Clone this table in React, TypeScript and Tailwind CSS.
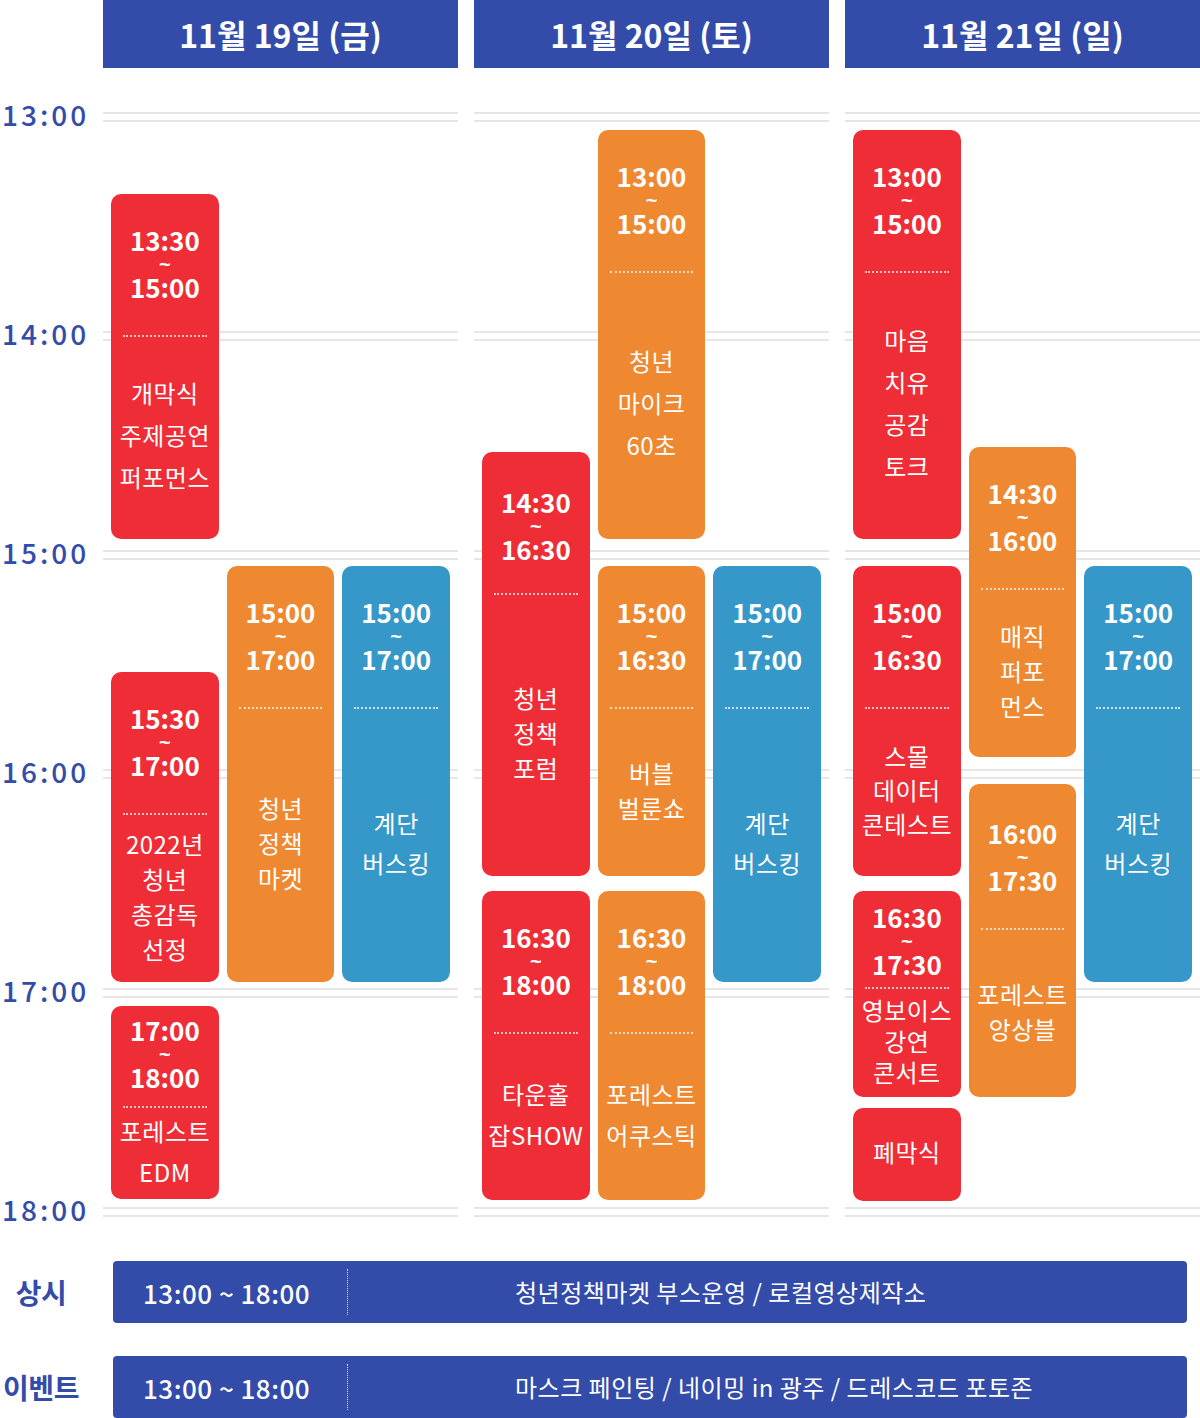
import React from "react"

type Color = "red" | "orange" | "blue"

interface Slot {
  color: Color
  box: string
  pad?: string
  lh?: string
  time?: [string, string]
  title: string[]
}

const COLORS: Record<Color, string> = {
  red: "bg-[#ef2d36]",
  orange: "bg-[#ee8831]",
  blue: "bg-[#3698c8]",
}

const STD = "pt-[33px] pb-[35px]"

const busking: Slot = {
  color: "blue",
  box: "mt-[498px] h-[416px]",
  pad: STD,
  lh: "leading-[40px]",
  time: ["15:00", "17:00"],
  title: ["계단", "버스킹"],
}

const days: { label: string; cols: Slot[][] }[] = [
  {
    label: "11월 19일 (금)",
    cols: [
      [
        {
          color: "red",
          box: "mt-[126px] h-[345px]",
          pad: STD,
          lh: "leading-[42px]",
          time: ["13:30", "15:00"],
          title: ["개막식", "주제공연", "퍼포먼스"],
        },
        {
          color: "red",
          box: "mt-[133px] h-[310px]",
          pad: STD,
          lh: "leading-[35px]",
          time: ["15:30", "17:00"],
          title: ["2022년", "청년", "총감독", "선정"],
        },
        {
          color: "red",
          box: "mt-[24px] h-[193px]",
          pad: "pt-[11px] pb-[16px]",
          lh: "leading-[41px]",
          time: ["17:00", "18:00"],
          title: ["포레스트", "EDM"],
        },
      ],
      [
        {
          color: "orange",
          box: "mt-[498px] h-[416px]",
          pad: STD,
          lh: "leading-[35px]",
          time: ["15:00", "17:00"],
          title: ["청년", "정책", "마켓"],
        },
      ],
      [busking],
    ],
  },
  {
    label: "11월 20일 (토)",
    cols: [
      [
        {
          color: "red",
          box: "mt-[384px] h-[424px]",
          pad: "pt-[37px] pb-[31px]",
          lh: "leading-[35px]",
          time: ["14:30", "16:30"],
          title: ["청년", "정책", "포럼"],
        },
        {
          color: "red",
          box: "mt-[15px] h-[309px]",
          pad: STD,
          lh: "leading-[41px]",
          time: ["16:30", "18:00"],
          title: ["타운홀", "잡SHOW"],
        },
      ],
      [
        {
          color: "orange",
          box: "mt-[62px] h-[409px]",
          pad: STD,
          lh: "leading-[42px]",
          time: ["13:00", "15:00"],
          title: ["청년", "마이크", "60초"],
        },
        {
          color: "orange",
          box: "mt-[27px] h-[310px]",
          pad: STD,
          lh: "leading-[35px]",
          time: ["15:00", "16:30"],
          title: ["버블", "벌룬쇼"],
        },
        {
          color: "orange",
          box: "mt-[15px] h-[309px]",
          pad: STD,
          lh: "leading-[41px]",
          time: ["16:30", "18:00"],
          title: ["포레스트", "어쿠스틱"],
        },
      ],
      [busking],
    ],
  },
  {
    label: "11월 21일 (일)",
    cols: [
      [
        {
          color: "red",
          box: "mt-[62px] h-[409px]",
          pad: STD,
          lh: "leading-[42px]",
          time: ["13:00", "15:00"],
          title: ["마음", "치유", "공감", "토크"],
        },
        {
          color: "red",
          box: "mt-[27px] h-[310px]",
          pad: STD,
          lh: "leading-[34px]",
          time: ["15:00", "16:30"],
          title: ["스몰", "데이터", "콘테스트"],
        },
        {
          color: "red",
          box: "mt-[15px] h-[206px]",
          pad: "pt-[13px] pb-[10px]",
          lh: "leading-[31px]",
          time: ["16:30", "17:30"],
          title: ["영보이스", "강연", "콘서트"],
        },
        {
          color: "red",
          box: "mt-[11px] h-[93px]",
          title: ["폐막식"],
        },
      ],
      [
        {
          color: "orange",
          box: "mt-[379px] h-[310px]",
          pad: STD,
          lh: "leading-[35px]",
          time: ["14:30", "16:00"],
          title: ["매직", "퍼포", "먼스"],
        },
        {
          color: "orange",
          box: "mt-[27px] h-[313px]",
          pad: "pt-[36px] pb-[35px]",
          lh: "leading-[35px]",
          time: ["16:00", "17:30"],
          title: ["포레스트", "앙상블"],
        },
      ],
      [busking],
    ],
  },
]

const hours = ["13:00", "14:00", "15:00", "16:00", "17:00", "18:00"]

const always = [
  { label: "상시", text: "청년정책마켓 부스운영 / 로컬영상제작소" },
  { label: "이벤트", text: "마스크 페인팅 / 네이밍 in 광주 / 드레스코드 포토존" },
]

function SlotBlock({ slot }: { slot: Slot }) {
  return (
    <div
      className={`${slot.box} ${COLORS[slot.color]} flex shrink-0 flex-col rounded-[10px] text-white`}
    >
      {slot.time && (
        <>
          <div className={`${slot.pad} flex flex-col items-center font-bold`}>
            <span className="text-[26px] leading-[26px]">{slot.time[0]}</span>
            <span className="h-[21px] font-['Liberation_Sans',sans-serif] text-[20px] leading-[22px]">
              ~
            </span>
            <span className="text-[26px] leading-[26px]">{slot.time[1]}</span>
          </div>
          <div className="mx-3 border-t-2 border-dotted border-white/70" />
        </>
      )}
      <div
        className={`flex flex-1 flex-col items-center justify-center pb-[6px] text-[24px] tracking-[0.5px] ${slot.lh ?? ""}`}
      >
        {slot.title.map((t) => (
          <span key={t}>{t}</span>
        ))}
      </div>
    </div>
  )
}

function DayColumn({ label, cols }: { label: string; cols: Slot[][] }) {
  return (
    <div className="flex w-[355px] flex-col">
      <div className="flex h-[68px] items-center justify-center bg-[#334ca9] text-[32px] font-bold text-white">
        {label}
      </div>
      <div className="relative h-[1162px]">
        {/* hour lines sit behind the blocks */}
        <div className="absolute inset-0 flex flex-col pt-[44px]">
          {hours.map((h) => (
            <div key={h} className="flex h-[219px] shrink-0 flex-col gap-[6px]">
              <div className="h-[2px] bg-[#e6e6e6]" />
              <div className="h-[2px] bg-[#e6e6e6]" />
            </div>
          ))}
        </div>
        <div className="relative flex gap-2 px-2">
          {cols.map((col, i) => (
            <div key={i} className="flex flex-1 flex-col">
              {col.map((slot, j) => (
                <SlotBlock key={j} slot={slot} />
              ))}
            </div>
          ))}
        </div>
      </div>
    </div>
  )
}

export default function App() {
  return (
    <div className="w-[1200px] overflow-hidden bg-white font-['Noto_Sans_CJK_KR',sans-serif]">
      <div className="flex">
        <div className="flex w-[103px] flex-col gap-[179px] pt-[94px] pl-[2px]">
          {hours.map((h) => (
            <div
              key={h}
              className="h-[40px] text-[28px] leading-[40px] font-medium tracking-[3px] text-[#334ca9]"
            >
              {h}
            </div>
          ))}
        </div>
        <div className="flex gap-4">
          {days.map((d) => (
            <DayColumn key={d.label} label={d.label} cols={d.cols} />
          ))}
        </div>
      </div>
      <div className="mt-[31px] flex flex-col gap-[33px]">
        {always.map((r) => (
          <div key={r.label} className="flex items-center">
            <div className="flex w-[82px] justify-center whitespace-nowrap text-[28px] font-bold tracking-[-0.5px] text-[#334ca9]">
              {r.label}
            </div>
            <div className="ml-[31px] flex h-[62px] w-[1074px] items-center rounded-[4px] bg-[#334ca9] text-white">
              <div className="w-[234px] pl-[30px] text-[26px] font-medium tracking-[0.5px]">
                13:00 ~ 18:00
              </div>
              <div className="h-[46px] border-l border-dotted border-white/80" />
              <div className="pl-[167px] text-[24px] tracking-[0.5px]">{r.text}</div>
            </div>
          </div>
        ))}
      </div>
    </div>
  )
}
